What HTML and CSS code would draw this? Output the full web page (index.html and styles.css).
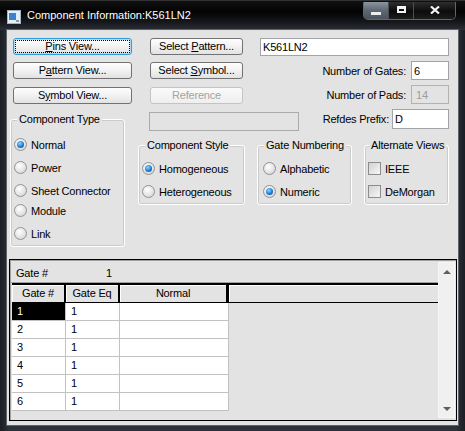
FILE: index.html
```html
<html>

<head>
  <meta charset="UTF-8" />
  <title>Component Information:K561LN2</title>
  <link rel="stylesheet" href="styles.css">
</head>

<body>
  <div class="window">
    <div class="titlebar">
      <svg class="appicon" width="14" height="14" viewBox="0 0 14 14">
        <rect x="0.5" y="0.5" width="13" height="13" fill="#e6eef6" stroke="#9fb4c8" />
        <rect x="2" y="3" width="7" height="7" fill="#3b82cf" />
        <rect x="9" y="10" width="3" height="2" fill="#8a9aaa" />
      </svg>
      <span class="title">Component Information:K561LN2</span>
      <div class="capbtns">
        <span class="capbtn min"><i></i></span>
        <span class="capbtn max"><i></i></span>
        <span class="capbtn close">
          <svg width="10" height="8" viewBox="0 0 10 8">
            <path d="M1 0.5 L9 7.5 M9 0.5 L1 7.5" stroke="#f4f4f4" stroke-width="2.2" />
          </svg>
        </span>
      </div>
    </div>

    <div class="client">
      <div class="top">
        <button class="btn focus pins"><u>P</u>ins View...</button>
        <button class="btn patv">P<u>a</u>ttern View...</button>
        <button class="btn symv">S<u>y</u>mbol View...</button>

        <button class="btn selpat">Select <u>P</u>attern...</button>
        <button class="btn selsym">Select <u>S</u>ymbol...</button>
        <button class="btn ref" disabled>Reference</button>
        <div class="dis"></div>

        <input class="edit name" type="text" value="K561LN2">
        <div class="field gates">
          <label>Number of Gates:</label>
          <input class="edit num" type="text" value="6">
        </div>
        <div class="field pads">
          <label>Number of Pads:</label>
          <input class="edit num" type="text" value="14" disabled>
        </div>
        <div class="field refdes">
          <label>Refdes Prefix:</label>
          <input class="edit prefix" type="text" value="D">
        </div>

        <fieldset class="group ctype">
          <legend>Component Type</legend>
          <div class="opt"><span class="radio on"></span>Normal</div>
          <div class="opt"><span class="radio"></span>Power</div>
          <div class="opt"><span class="radio"></span>Sheet Connector</div>
          <div class="opt tight"><span class="radio"></span>Module</div>
          <div class="opt"><span class="radio"></span>Link</div>
        </fieldset>

        <div class="groups">
          <fieldset class="group cstyle">
            <legend>Component Style</legend>
            <div class="opt"><span class="radio on"></span>Homogeneous</div>
            <div class="opt"><span class="radio"></span>Heterogeneous</div>
          </fieldset>
          <fieldset class="group gnum">
            <legend>Gate Numbering</legend>
            <div class="opt"><span class="radio"></span>Alphabetic</div>
            <div class="opt"><span class="radio on"></span>Numeric</div>
          </fieldset>
          <fieldset class="group altv">
            <legend>Alternate Views</legend>
            <div class="opt"><span class="check"></span>IEEE</div>
            <div class="opt"><span class="check"></span>DeMorgan</div>
          </fieldset>
        </div>
      </div>

      <div class="gridpanel">
        <div class="sheet">
          <div class="caption"><span class="capname">Gate #</span><span>1</span></div>
          <table class="grid">
            <thead>
              <tr>
                <th class="w1">Gate #</th>
                <th class="w2">Gate Eq</th>
                <th class="w3">Normal</th>
                <th class="fill"></th>
              </tr>
            </thead>
            <tbody>
              <tr><td class="sel">1</td><td>1</td><td></td><td class="fill"></td></tr>
              <tr><td>2</td><td>1</td><td></td><td class="fill"></td></tr>
              <tr><td>3</td><td>1</td><td></td><td class="fill"></td></tr>
              <tr><td>4</td><td>1</td><td></td><td class="fill"></td></tr>
              <tr><td>5</td><td>1</td><td></td><td class="fill"></td></tr>
              <tr><td>6</td><td>1</td><td></td><td class="fill"></td></tr>
            </tbody>
          </table>
        </div>
        <div class="vscroll">
          <span class="arrow"><i class="up"></i></span>
          <span class="arrow"><i class="down"></i></span>
        </div>
      </div>
    </div>
  </div>
</body>

</html>
```

FILE: styles.css
```css
* {
  margin: 0;
  padding: 0;
  box-sizing: border-box;
}

html,
body {
  width: 465px;
  height: 431px;
  overflow: hidden;
  background-color: #2a2e35;
}

body {
  font-family: "Liberation Sans", Arial, sans-serif;
  font-size: 11px;
  letter-spacing: -0.2px;
  color: #000;
}

.window {
  width: 465px;
  height: 431px;
  display: flex;
  flex-direction: column;
  background: linear-gradient(90deg, #1b1e23, #2d3139 2%, #2d3139 98%, #1b1e23);
}

/* title bar */
.titlebar {
  height: 30px;
  flex: none;
  display: flex;
  align-items: flex-start;
  padding-left: 7px;
  background: linear-gradient(#555 0, #101010 1px, #030303 40%, #17191d 75%, #2b2f36 100%);
}

.appicon {
  flex: none;
  margin-top: 10px;
}

.title {
  margin: 9px 0 0 6px;
  color: #fff;
  line-height: 13px;
  letter-spacing: 0;
}

.capbtns {
  display: flex;
  height: 18px;
  margin: 2px 9px 0 auto;
  border: 1px solid #666;
  border-top: 0;
  border-radius: 0 0 5px 5px;
  overflow: hidden;
}

.capbtn {
  display: flex;
  align-items: center;
  justify-content: center;
  background: linear-gradient(#2e2e2e, #0c0c0c 55%, #1c1c1c);
  border-left: 1px solid #4c4c4c;
}

.capbtn.min {
  width: 24px;
  border-left: 0;
  background: linear-gradient(#8a95a2, #5d6772 50%, #4b545e);
}

.capbtn.max {
  width: 25px;
}

.capbtn.close {
  width: 42px;
}

.min i {
  width: 10px;
  height: 3px;
  margin-top: 6px;
  background: #ececec;
}

.max i {
  width: 9px;
  height: 7px;
  margin-top: -2px;
  border: 2px solid #f4f4f4;
  border-top-width: 3px;
}

.close svg {
  margin-top: -2px;
}

/* client area */
.client {
  flex: 1;
  margin: 0 7px 6px;
  padding-top: 8px;
  display: flex;
  flex-direction: column;
  background: #e3e3e3;
  box-shadow: 0 0 0 1px #5d6169;
}

.top {
  height: 221px;
  flex: none;
  padding-left: 6px;
  display: grid;
  grid-template-columns: 119px 18px 93px 17px 39px 150px;
  grid-template-rows: 18px 19px 19px 20px 125px;
  row-gap: 5px;
  grid-template-areas:
    "pins . selpat . name name"
    "patv . selsym . gates gates"
    "symv . ref . pads pads"
    "ctype . dis dis dis refdes"
    "ctype groups groups groups groups groups";
}

.pins { grid-area: pins; }
.patv { grid-area: patv; margin-top: 1px; }
.symv { grid-area: symv; margin-top: 2px; }
.selpat { grid-area: selpat; }
.selsym { grid-area: selsym; margin-top: 1px; }
.ref { grid-area: ref; margin-top: 2px; }
.name { grid-area: name; }
.gates { grid-area: gates; }
.pads { grid-area: pads; }
.refdes { grid-area: refdes; }

/* buttons */
.btn {
  height: 17px;
  display: block;
  position: relative;
  font: inherit;
  letter-spacing: inherit;
  line-height: 15px;
  text-align: center;
  white-space: nowrap;
  color: #000;
  border: 1px solid #727272;
  border-radius: 3px;
  background: linear-gradient(#fefefe, #f3f3f3 45%, #e2e2e2);
}

.btn.focus {
  border-color: #2f9ee0;
  box-shadow: inset 0 0 0 1px #a8dcf8;
}

.btn.focus::after {
  content: "";
  position: absolute;
  top: 1px;
  left: 1px;
  right: 1px;
  bottom: 1px;
  border: 1px dotted #000;
}

.btn[disabled] {
  color: #a3a3a3;
  border-color: #c4c4c4;
  background: linear-gradient(#fafafa, #efefef);
}

.dis {
  grid-area: dis;
  align-self: start;
  height: 19px;
  margin: 3px 0 0 -1px;
  border: 1px solid #ababab;
  background: #e3e3e3;
}

/* edits */
.edit {
  font: inherit;
  letter-spacing: inherit;
  color: #000;
  height: 100%;
  padding: 0 2px;
  border: 1px solid #a1a5aa;
  background: #fff;
  outline: none;
}

.edit[disabled] {
  color: #9c9c9c;
  background: #e3e3e3;
  border-color: #b2b2b2;
  padding-left: 4px;
}

.field {
  display: flex;
  justify-content: flex-end;
  align-items: center;
  gap: 5px;
  white-space: nowrap;
}

.field.refdes {
  gap: 3px;
}

.field .num {
  width: 38px;
}

.field .prefix {
  width: 57px;
}

/* group boxes */
.group {
  min-width: 0;
  border: 1px solid #fff;
  border-radius: 3px;
  box-shadow: inset 0 0 0 1px #cbcbcb;
  padding: 0 3px 1px;
  align-self: start;
}

.group legend {
  margin-left: 3px;
  padding: 0 2px;
  line-height: 12px;
  white-space: nowrap;
  background: #e3e3e3;
}

.ctype {
  grid-area: ctype;
  width: 115px;
  margin: 4px 0 0 -3px;
  padding-top: 8px;
}

.groups {
  grid-area: groups;
  align-self: start;
  display: flex;
  gap: 12px;
  margin-top: 5px;
  padding-left: 6px;
}

.cstyle,
.gnum,
.altv {
  padding-top: 6px;
}

.cstyle {
  width: 107px;
}

.gnum {
  width: 95px;
  padding-left: 5px;
}

.gnum legend {
  margin-left: 1px;
}

.altv {
  width: 85px;
}

.altv legend {
  margin-left: 1px;
}

.opt {
  height: 23px;
  display: flex;
  align-items: center;
  white-space: nowrap;
}

.opt.tight {
  margin-top: -3px;
}

.radio {
  flex: none;
  width: 13px;
  height: 13px;
  margin-right: 4px;
  display: flex;
  align-items: center;
  justify-content: center;
  border: 1px solid #939393;
  border-radius: 50%;
  background: radial-gradient(circle at 40% 35%, #ffffff, #e2e2e2 60%, #c6c6c6);
}

.radio.on::after {
  content: "";
  width: 7px;
  height: 7px;
  border-radius: 50%;
  background: radial-gradient(circle at 40% 35%, #8fd8ff, #1b7cd6 55%, #0b3f82);
}

.check {
  flex: none;
  width: 13px;
  height: 13px;
  margin-right: 4px;
  border: 1px solid #8c8c8c;
  background: linear-gradient(135deg, #d2d2d2, #f6f6f6);
}

/* gate grid */
.gridpanel {
  flex: 1;
  margin: 0 1px 4px 2px;
  display: flex;
  border: 1px solid #000;
  box-shadow: inset 1px 1px 0 #a0a0a0;
}

.sheet {
  flex: 1;
  display: flex;
  flex-direction: column;
  padding-top: 1px;
  padding-left: 1px;
}

.caption {
  height: 22px;
  flex: none;
  display: flex;
  align-items: center;
  padding: 2px 0 0 5px;
  border-bottom: 1px solid #a0a0a0;
}

.capname {
  width: 90px;
}

.grid {
  width: calc(100% - 1px);
  margin-left: 1px;
  table-layout: fixed;
  border-collapse: separate;
  border-spacing: 0;
  font-size: 11px;
}

.grid th {
  font-weight: normal;
  line-height: 17px;
  padding: 0;
  text-align: center;
  white-space: nowrap;
  background: #e3e3e3;
  border-top: 2px solid #000;
  border-bottom: 1px solid #000;
  border-right: 2px solid #000;
  box-shadow: inset 1px 1px 0 #fff;
}

.grid th.w1 {
  width: 54px;
}

.grid th.w2 {
  width: 54px;
}

.grid th.w3 {
  width: 109px;
  border-right-width: 3px;
}

.grid th.fill {
  border-right: 0;
}

.grid td {
  line-height: 17px;
  padding: 0 0 0 5px;
  background: #fff;
  border-right: 1px solid #c2c2c2;
  border-bottom: 1px solid #c2c2c2;
}

.grid td.fill {
  background: transparent;
  border: 0;
}

.grid td.sel {
  background: #000;
  color: #fff;
}

.vscroll {
  width: 17px;
  flex: none;
  margin: 2px 1px 2px 0;
  display: flex;
  flex-direction: column;
  justify-content: space-between;
  background: #f0f0f0;
  border: 1px solid #f7f7f7;
}

.arrow {
  height: 17px;
  display: flex;
  align-items: center;
  justify-content: center;
}

.arrow i {
  width: 0;
  height: 0;
  border-left: 4px solid transparent;
  border-right: 4px solid transparent;
}

.arrow .up {
  border-bottom: 4px solid #5e5e5e;
}

.arrow .down {
  border-top: 4px solid #5e5e5e;
}
```
